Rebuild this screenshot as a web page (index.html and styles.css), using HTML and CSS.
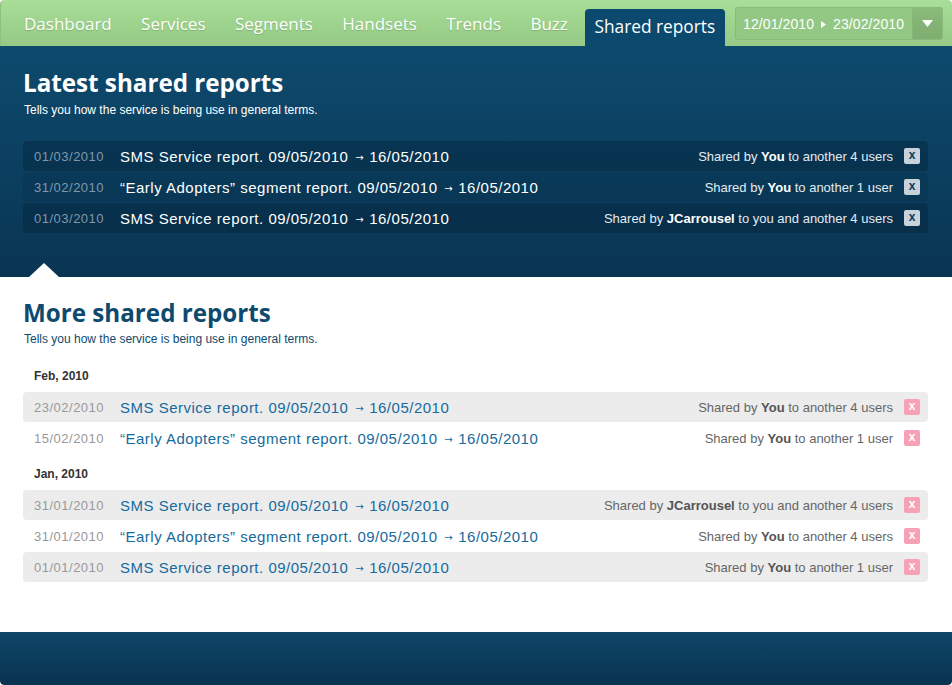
FILE: index.html
```html
<!DOCTYPE html>
<html>
<head>
<meta charset="utf-8">
<link rel="stylesheet" href="styles.css">
</head>
<body>
<div class="page">
  <header class="topbar">
    <nav class="nav">
      <a class="nav-item">Dashboard</a>
      <a class="nav-item">Services</a>
      <a class="nav-item">Segments</a>
      <a class="nav-item">Handsets</a>
      <a class="nav-item">Trends</a>
      <a class="nav-item">Buzz</a>
      <a class="nav-item active">Shared reports</a>
    </nav>
    <div class="datepicker">
      <span class="range">12/01/2010 <svg class="sep" width="5" height="7" viewBox="0 0 5 7"><path d="M0 0L5 3.5L0 7Z" fill="#fff"/></svg> 23/02/2010</span>
      <span class="drop"><svg width="11" height="7" viewBox="0 0 11 7"><path d="M0 0H11L5.5 7Z" fill="#fff"/></svg></span>
    </div>
  </header>

  <section class="latest">
    <h1 class="title">Latest shared reports</h1>
    <p class="subtitle">Tells you how the service is being use in general terms.</p>
    <ul class="list dark">
      <li class="row">
        <span class="date">01/03/2010</span>
        <span class="name">SMS Service report. 09/05/2010 <span class="arr">→</span> 16/05/2010</span>
        <span class="share">Shared by <b>You</b> to another 4 users</span>
        <span class="close">x</span>
      </li>
      <li class="row">
        <span class="date">31/02/2010</span>
        <span class="name">“Early Adopters” segment report. 09/05/2010 <span class="arr">→</span> 16/05/2010</span>
        <span class="share">Shared by <b>You</b> to another 1 user</span>
        <span class="close">x</span>
      </li>
      <li class="row">
        <span class="date">01/03/2010</span>
        <span class="name">SMS Service report. 09/05/2010 <span class="arr">→</span> 16/05/2010</span>
        <span class="share">Shared by <b>JCarrousel</b> to you and another 4 users</span>
        <span class="close">x</span>
      </li>
    </ul>
  </section>

  <section class="more">
    <h2 class="title">More shared reports</h2>
    <p class="subtitle">Tells you how the service is being use in general terms.</p>
    <div class="groups">
      <div class="group">
        <h3 class="month">Feb, 2010</h3>
        <ul class="list light">
          <li class="row">
            <span class="date">23/02/2010</span>
            <span class="name">SMS Service report. 09/05/2010 <span class="arr">→</span> 16/05/2010</span>
            <span class="share">Shared by <b>You</b> to another 4 users</span>
            <span class="close">x</span>
          </li>
          <li class="row">
            <span class="date">15/02/2010</span>
            <span class="name">“Early Adopters” segment report. 09/05/2010 <span class="arr">→</span> 16/05/2010</span>
            <span class="share">Shared by <b>You</b> to another 1 user</span>
            <span class="close">x</span>
          </li>
        </ul>
      </div>
      <div class="group">
        <h3 class="month">Jan, 2010</h3>
        <ul class="list light">
          <li class="row">
            <span class="date">31/01/2010</span>
            <span class="name">SMS Service report. 09/05/2010 <span class="arr">→</span> 16/05/2010</span>
            <span class="share">Shared by <b>JCarrousel</b> to you and another 4 users</span>
            <span class="close">x</span>
          </li>
          <li class="row">
            <span class="date">31/01/2010</span>
            <span class="name">“Early Adopters” segment report. 09/05/2010 <span class="arr">→</span> 16/05/2010</span>
            <span class="share">Shared by <b>You</b> to another 4 users</span>
            <span class="close">x</span>
          </li>
          <li class="row">
            <span class="date">01/01/2010</span>
            <span class="name">SMS Service report. 09/05/2010 <span class="arr">→</span> 16/05/2010</span>
            <span class="share">Shared by <b>You</b> to another 1 user</span>
            <span class="close">x</span>
          </li>
        </ul>
      </div>
    </div>
  </section>

  <footer class="footer"></footer>
</div>
</body>
</html>
```
FILE: styles.css
```css
* { box-sizing: border-box; }
html, body { margin: 0; padding: 0; background: #fff; }
body { font-family: "Liberation Sans", Arial, sans-serif; }
.page { width: 952px; height: 685px; overflow: hidden; border-radius: 4px; display: flex; flex-direction: column; }

.topbar {
  height: 46px;
  display: flex;
  align-items: flex-start;
  background: linear-gradient(#a8de98, #95c985);
  border-left: 1px solid #8cc07c;
  border-radius: 4px 4px 0 0;
  padding-left: 9px;
}
.nav { display: flex; height: 46px; }
.nav-item {
  font-family: "Open Sans", sans-serif;
  font-size: 17px;
  color: #fff;
  padding: 2px 14.7px 0;
  line-height: 44px;
  height: 46px;
  text-shadow: 0 1px 1px rgba(40, 90, 30, 0.25);
}
.nav-item:first-child { padding-left: 14px; }
.nav-item.active {
  margin-top: 9px;
  margin-left: 3px;
  height: 37px;
  line-height: 34px;
  padding: 1px 10px 0 9px;
  background: #0b4a6e;
  border-radius: 4px 4px 0 0;
  text-shadow: none;
  font-size: 17.3px;
}
.datepicker {
  margin: 7px 9px 0 auto;
  width: 208px;
  height: 33px;
  display: flex;
  border: 1px solid #88bb79;
  border-radius: 3px;
  background: #93c784;
  overflow: hidden;
}
.range {
  flex: 1;
  color: #fff;
  font-size: 14px;
  line-height: 33px;
  padding-left: 7px;
  letter-spacing: 0.1px;
}
.sep { margin: 0 3px; vertical-align: 1px; }
.drop {
  width: 30px;
  background: linear-gradient(#8abb7b, #7fae70);
  border-left: 1px solid #86b877;
  display: flex;
  align-items: center;
  justify-content: center;
}

.latest {
  position: relative;
  height: 231px;
  padding: 22px 24px 0 23px;
  background: linear-gradient(#0d4a6e, #0a3552);
}
.latest::after {
  content: "";
  position: absolute;
  left: 29px;
  bottom: 0;
  border-left: 15px solid transparent;
  border-right: 15px solid transparent;
  border-bottom: 14px solid #fff;
}
.title {
  margin: 0;
  font-family: "Open Sans", sans-serif;
  font-weight: 700;
  font-size: 24.2px;
  line-height: 30px;
  color: #fff;
}
.subtitle {
  margin: 4px 0 0 1px;
  font-size: 12px;
  line-height: 16px;
  color: #fff;
}
.list { list-style: none; margin: 0; padding: 0; }
.dark { margin-top: 23px; }
.row {
  height: 30px;
  display: flex;
  align-items: center;
  padding: 0 8px 0 11px;
  border-radius: 4px;
  margin-bottom: 1px;
}
.date {
  width: 86px;
  font-size: 13px;
  letter-spacing: 0.5px;
}
.name {
  flex: 1;
  font-size: 15px;
  letter-spacing: 0.5px;
}
.arr {
  font-family: "DejaVu Sans", sans-serif;
  font-size: 10px;
  letter-spacing: 0;
  vertical-align: 1px;
  margin: 0 1px 0 2px;
}
.share {
  font-size: 13px;
  margin-right: 11px;
}
.close {
  width: 16px;
  height: 16px;
  border-radius: 2px;
  font-size: 12px;
  font-weight: 700;
  line-height: 15px;
  text-align: center;
}

.dark .row { background: rgba(0, 20, 40, 0.28); }
.dark .row:nth-child(2) { background: rgba(0, 20, 40, 0.1); }
.dark .date { color: #7f98ab; }
.dark .name { color: #fff; }
.dark .share { color: #e3ebf1; }
.dark .share b { color: #fff; }
.dark .close { background: #c7d2da; color: #0c3a58; }

.more {
  flex: 1;
  padding: 21px 24px 0 23px;
  background: #fff;
}
.more .title { color: #0e4a6e; }
.more .subtitle { color: #0e4a6e; margin-top: 3px; }
.groups { margin-top: 21px; }
.group + .group { margin-top: 13px; }
.month {
  margin: 0 0 8px 11px;
  font-size: 12px;
  line-height: 16px;
  font-weight: 700;
  color: #333;
}
.light .row:nth-child(odd) { background: #ececec; }
.light .date { color: #999; }
.light .name { color: #176a9c; }
.light .share { color: #666; }
.light .share b { color: #555; }
.light .close { background: #f7a1b5; color: #fff; }

.footer {
  height: 53px;
  background: linear-gradient(#0e4668, #0a3350);
  border-radius: 0 0 4px 4px;
}
```
